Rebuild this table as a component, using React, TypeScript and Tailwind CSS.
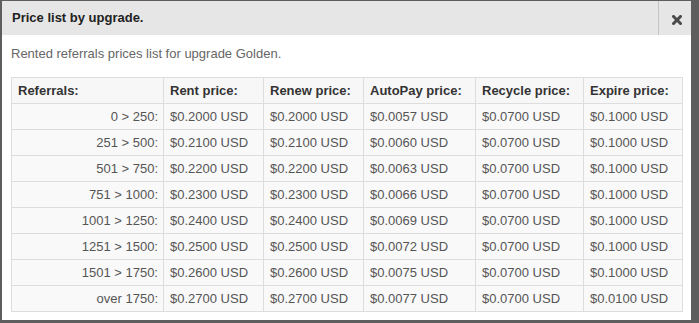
import React from "react";

const rows = [
  ["0 > 250:", "$0.2000 USD", "$0.2000 USD", "$0.0057 USD", "$0.0700 USD", "$0.1000 USD"],
  ["251 > 500:", "$0.2100 USD", "$0.2100 USD", "$0.0060 USD", "$0.0700 USD", "$0.1000 USD"],
  ["501 > 750:", "$0.2200 USD", "$0.2200 USD", "$0.0063 USD", "$0.0700 USD", "$0.1000 USD"],
  ["751 > 1000:", "$0.2300 USD", "$0.2300 USD", "$0.0066 USD", "$0.0700 USD", "$0.1000 USD"],
  ["1001 > 1250:", "$0.2400 USD", "$0.2400 USD", "$0.0069 USD", "$0.0700 USD", "$0.1000 USD"],
  ["1251 > 1500:", "$0.2500 USD", "$0.2500 USD", "$0.0072 USD", "$0.0700 USD", "$0.1000 USD"],
  ["1501 > 1750:", "$0.2600 USD", "$0.2600 USD", "$0.0075 USD", "$0.0700 USD", "$0.1000 USD"],
  ["over 1750:", "$0.2700 USD", "$0.2700 USD", "$0.0077 USD", "$0.0700 USD", "$0.0100 USD"],
];

const headers = ["Referrals:", "Rent price:", "Renew price:", "AutoPay price:", "Recycle price:", "Expire price:"];

function App() {
  return (
    <div className="w-[699px] h-[323px] bg-[#5e5e5e] pl-[2px] pt-[1px] pr-[8px] pb-[3px] font-['Liberation_Sans',Arial,sans-serif]">
      <div className="bg-white h-full flex flex-col">
        <div className="h-[34px] bg-[#e6e6e6] flex items-stretch">
          <h4 className="flex-1 flex items-center pl-[10px] text-[13px] font-bold text-[#222]">
            Price list by upgrade.
          </h4>
          <button
            type="button"
            className="w-[33px] border-l border-[#c4c4c4] flex items-center justify-center pl-[4px] pt-[3px]"
          >
            <svg width="10" height="10" viewBox="0 0 10 10">
              <path d="M1.5 1.5 L8.5 8.5 M8.5 1.5 L1.5 8.5" stroke="#4a4a4a" strokeWidth="3" strokeLinecap="square" />
            </svg>
          </button>
        </div>
        <div className="px-[9px] pt-[10px]">
          <p className="text-[13px] leading-[18px] text-[#666] mb-[14px]">
            Rented referrals prices list for upgrade Golden.
          </p>
          <table className="w-[671px] table-fixed border-collapse text-[13px]">
            <colgroup>
              <col className="w-[152px]" />
              <col className="w-[100px]" />
              <col className="w-[100px]" />
              <col className="w-[112px]" />
              <col className="w-[108px]" />
              <col className="w-[99px]" />
            </colgroup>
            <thead>
              <tr className="h-[26px] bg-[#f7f7f7]">
                {headers.map((h) => (
                  <th key={h} className="border border-[#dddddd] px-[6px] text-left font-bold text-[#333] whitespace-nowrap">
                    {h}
                  </th>
                ))}
              </tr>
            </thead>
            <tbody>
              {rows.map((r) => (
                <tr key={r[0]} className="h-[26px] bg-[#f9f9f9]">
                  {r.map((c, i) => (
                    <td
                      key={i}
                      className={
                        i === 0
                          ? "border border-[#dddddd] px-[5px] text-right text-[#555] whitespace-nowrap"
                          : "border border-[#dddddd] px-[6px] text-left text-[#555] whitespace-nowrap"
                      }
                    >
                      {c}
                    </td>
                  ))}
                </tr>
              ))}
            </tbody>
          </table>
        </div>
      </div>
    </div>
  );
}

export default App;
